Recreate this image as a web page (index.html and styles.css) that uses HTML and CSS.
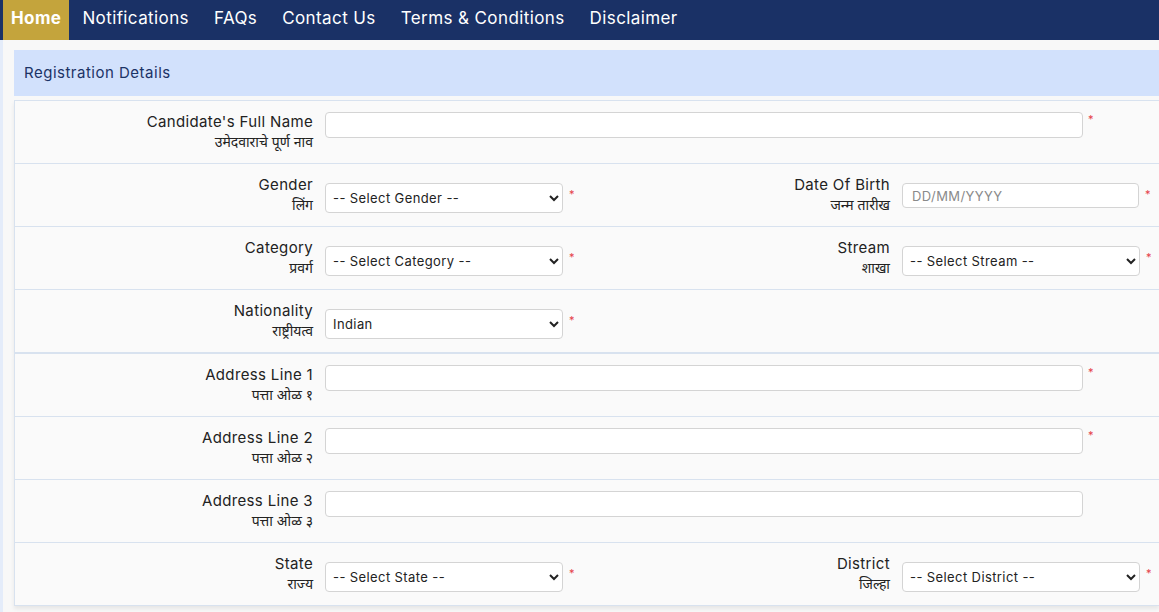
FILE: index.html
```html
<!DOCTYPE html>
<html>
<head>
    <meta charset="UTF-8">
    <link rel="stylesheet" href="styles.css">
</head>
<body>
    <ul class="topnav">
        <li><a class="active">Home</a></li>
        <li><a>Notifications</a></li>
        <li><a>FAQs</a></li>
        <li><a>Contact Us</a></li>
        <li><a>Terms &amp; Conditions</a></li>
        <li><a>Disclaimer</a></li>
    </ul>
    <div class="page">
        <div class="panel-head">Registration Details</div>

        <div class="form-card">
            <div class="form-row full">
                <label class="lbl">Candidate's Full Name<br><span class="mr">उमेदवाराचे पूर्ण नाव</span></label>
                <div class="field"><input type="text" class="txt-wide"><span class="req">*</span></div>
            </div>
            <div class="form-row half">
                <label class="lbl">Gender<br><span class="mr">लिंग</span></label>
                <div class="field mid">
                    <select class="sel"><option>-- Select Gender --</option></select><span class="req">*</span>
                </div>
                <label class="lbl">Date Of Birth<br><span class="mr">जन्म तारीख</span></label>
                <div class="field mid">
                    <input type="text" class="txt-half" placeholder="DD/MM/YYYY"><span class="req">*</span>
                </div>
            </div>
            <div class="form-row half">
                <label class="lbl">Category<br><span class="mr">प्रवर्ग</span></label>
                <div class="field mid">
                    <select class="sel"><option>-- Select Category --</option></select><span class="req">*</span>
                </div>
                <label class="lbl">Stream<br><span class="mr">शाखा</span></label>
                <div class="field mid">
                    <select class="sel"><option>-- Select Stream --</option></select><span class="req">*</span>
                </div>
            </div>
            <div class="form-row half">
                <label class="lbl">Nationality<br><span class="mr">राष्ट्रीयत्व</span></label>
                <div class="field mid">
                    <select class="sel"><option>Indian</option></select><span class="req">*</span>
                </div>
            </div>
        </div>

        <div class="form-card">
            <div class="form-row full">
                <label class="lbl">Address Line 1<br><span class="mr">पत्ता ओळ १</span></label>
                <div class="field"><input type="text" class="txt-wide"><span class="req">*</span></div>
            </div>
            <div class="form-row full">
                <label class="lbl">Address Line 2<br><span class="mr">पत्ता ओळ २</span></label>
                <div class="field"><input type="text" class="txt-wide"><span class="req">*</span></div>
            </div>
            <div class="form-row full">
                <label class="lbl">Address Line 3<br><span class="mr">पत्ता ओळ ३</span></label>
                <div class="field"><input type="text" class="txt-wide"></div>
            </div>
            <div class="form-row half">
                <label class="lbl">State<br><span class="mr">राज्य</span></label>
                <div class="field mid">
                    <select class="sel"><option>-- Select State --</option></select><span class="req">*</span>
                </div>
                <label class="lbl">District<br><span class="mr">जिल्हा</span></label>
                <div class="field mid">
                    <select class="sel"><option>-- Select District --</option></select><span class="req">*</span>
                </div>
            </div>
        </div>
    </div>
</body>
</html>
```

FILE: styles.css
```css
body {
    margin: 0;
    background-color: #e4ecfa;
    font-family: Inter, "Noto Sans", sans-serif;
    color: #222;
    height: 612px;
    overflow: hidden;
}

.topnav {
    list-style-type: none;
    margin: 0;
    padding: 0 0 0 3px;
    height: 40px;
    background-color: #1a3166;
    display: flex;
}

    .topnav li a {
        display: block;
        height: 40px;
        line-height: 37px;
        padding: 0 8px;
        margin-right: 9px;
        color: #ffffff;
        font-size: 17px;
        letter-spacing: 0.4px;
        cursor: pointer;
    }

    .topnav li a.active {
        background-color: #c4a43c;
        font-weight: bold;
        margin-right: 5px;
    }

.page {
    margin-left: 3px;
    padding: 10px 0 0 11px;
    background-color: #f8f8f8;
    min-height: 600px;
}

.panel-head {
    height: 46px;
    line-height: 46px;
    padding-left: 10px;
    background-color: #d2e1fc;
    color: #1c3366;
    font-size: 15px;
    letter-spacing: 0.5px;
    margin-bottom: 4px;
}

.form-card {
    background-color: #fafafa;
    border-top: 1px solid #d8e2ef;
    border-left: 1px solid #d8e2ef;
    box-shadow: 0 3px 4px rgba(0, 0, 0, 0.07);
}

.form-row {
    display: grid;
    height: 62px;
    border-bottom: 1px solid #d8e2ef;
    box-sizing: content-box;
}

    .form-row.full {
        grid-template-columns: 310px 1fr;
    }

    .form-row.half {
        grid-template-columns: 310px 250px 327px 1fr;
    }

.lbl {
    text-align: right;
    padding: 11px 12px 0 0;
    font-size: 15px;
    letter-spacing: 0.35px;
    line-height: 20px;
    color: #222;
}

    .lbl .mr {
        font-size: 14px;
        letter-spacing: 0;
    }

.field {
    display: flex;
    align-items: flex-start;
    padding-top: 11px;
}

    .field.mid {
        padding-top: 19px;
    }

.txt-wide,
.txt-half,
.sel {
    box-sizing: border-box;
    border: 1px solid #d4d4d4;
    border-radius: 4px;
    background-color: #ffffff;
    font-family: Inter, "Noto Sans", sans-serif;
    font-size: 13px;
    letter-spacing: 0.4px;
    color: #222;
    margin: 0;
}

.txt-wide {
    width: 758px;
    height: 26px;
}

.txt-half {
    width: 237px;
    height: 25px;
    padding-left: 9px;
}

    .txt-half::placeholder {
        color: #8a8a8a;
    }

.sel {
    width: 238px;
    height: 30px;
    padding-left: 3px;
}

.req {
    color: #e5404a;
    font-size: 11px;
    margin-left: 5px;
    line-height: 11px;
    margin-top: 2px;
}

    .mid .req {
        margin-left: 6px;
        margin-top: 6px;
    }
```
